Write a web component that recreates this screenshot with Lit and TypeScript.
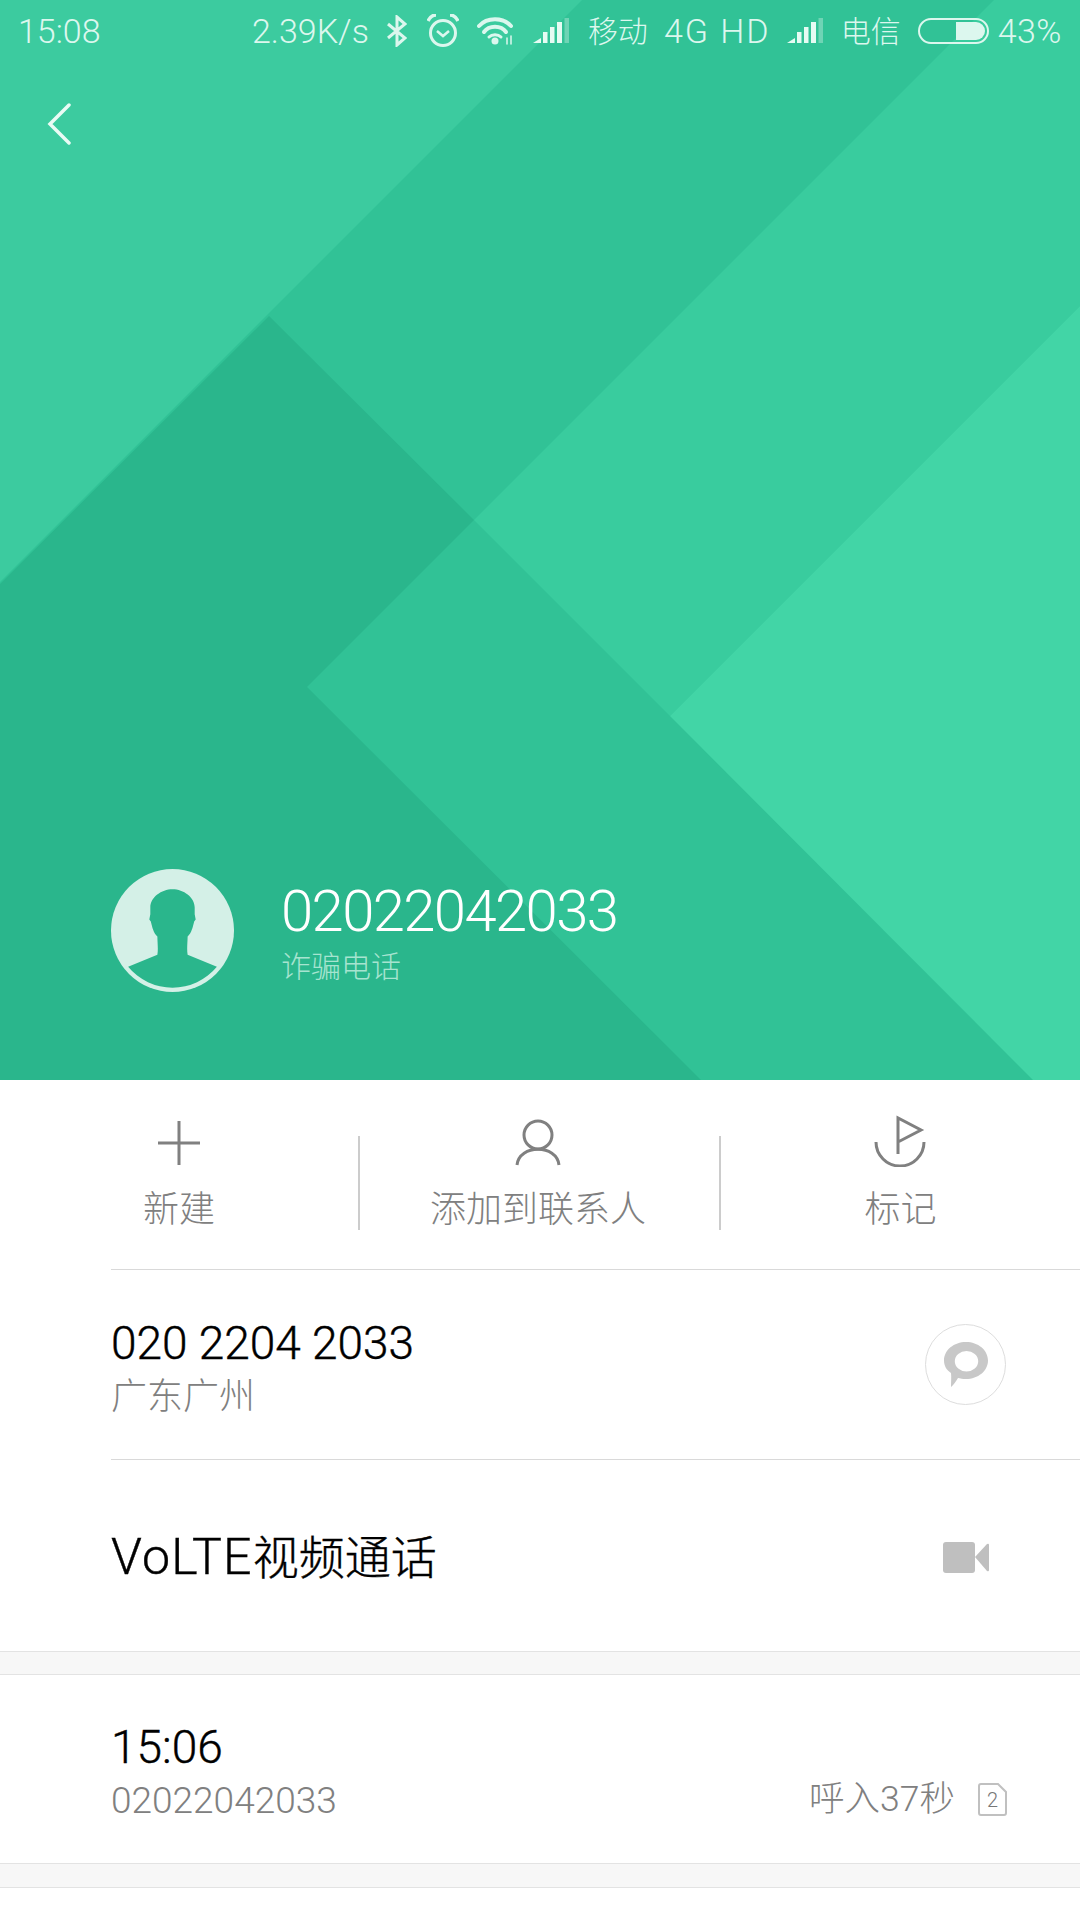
import { LitElement, html, css } from "lit";
import { customElement } from "lit/decorators.js";

const signal = html`<svg class="sig" width="36" height="26" viewBox="0 0 36 26">
  <path d="M0 25 L8 20 V25 Z" fill="#e6fbf3"/>
  <rect x="10" y="14" width="4.5" height="11" fill="#e6fbf3"/>
  <rect x="17" y="9" width="4.5" height="16" fill="#e6fbf3"/>
  <rect x="24" y="4" width="5" height="21" fill="#e6fbf3"/>
  <rect x="31.5" y="0" width="4.5" height="25" fill="#ffffff" opacity="0.3"/>
</svg>`;

@customElement("app-root")
export class AppRoot extends LitElement {
  static styles = css`
    :host {
      display: block;
      width: 1080px;
      height: 1920px;
      background: #fff;
      overflow: hidden;
      font-family: Roboto, "Noto Sans CJK SC", sans-serif;
      font-weight: 300;
    }
    .hero {
      position: relative;
      height: 1080px;
      display: flex;
      flex-direction: column;
      color: #fff;
    }
    .bg {
      position: absolute;
      left: 0;
      top: 0;
    }
    .status {
      position: relative;
      display: flex;
      align-items: center;
      height: 62px;
      padding: 0 18px;
      font-size: 34px;
      color: #dcf7ee;
    }
    .status .right {
      margin-left: auto;
      display: flex;
      align-items: center;
    }
    .right > * {
      flex: none;
    }
    .cn {
      font-size: 30px;
      padding-bottom: 4px;
    }
    .bt {
      margin-left: 18px;
    }
    .alarm {
      margin-left: 20px;
    }
    .wifi {
      margin-left: 18px;
    }
    .sig {
      margin-left: 18px;
    }
    .mobile {
      margin-left: 19px;
    }
    .net {
      margin-left: 16px;
      letter-spacing: 2px;
    }
    .sig2 {
      display: flex;
    }
    .sig2 .sig {
      margin-left: 16px;
    }
    .tele {
      margin-left: 18px;
    }
    .batt {
      margin-left: 17px;
    }
    .pct {
      margin-left: 9px;
      letter-spacing: 0.5px;
    }
    .back {
      position: relative;
      margin: 41px 0 0 46px;
    }
    .who {
      position: relative;
      margin-top: auto;
      display: flex;
      align-items: center;
      padding: 0 0 88px 111px;
    }
    .who .txt {
      margin-left: 47px;
      padding-top: 2px;
    }
    .num {
      font-size: 58px;
      line-height: 68px;
      letter-spacing: -1.6px;
    }
    .tag {
      font-size: 30px;
      line-height: 40px;
      margin-top: 2px;
      color: #a6e4d0;
    }
    .actions {
      display: grid;
      grid-template-columns: 358px 2px 359px 2px 359px;
      height: 189px;
      align-items: start;
    }
    .act {
      display: flex;
      flex-direction: column;
      align-items: center;
      padding-top: 35px;
      color: #808080;
      font-size: 36px;
      line-height: 40px;
    }
    .act span {
      margin-top: 23px;
      white-space: nowrap;
    }
    .act.mid {
      padding-right: 3px;
    }
    .sep {
      height: 94px;
      margin-top: 56px;
      background: #ccc;
    }
    .row {
      margin-left: 111px;
      border-top: 1px solid #d9d9d9;
      height: 189px;
      padding-right: 74px;
      display: flex;
      align-items: center;
      justify-content: space-between;
    }
    .row.tall {
      height: 187px;
      padding-top: 4px;
    }
    .two {
      padding-top: 8px;
    }
    .main {
      font-size: 46px;
      line-height: 56px;
      color: #000;
      -webkit-text-stroke: 0.4px #000;
    }
    .lat {
      font-size: 50px;
      letter-spacing: 1.2px;
    }
    .sub {
      font-size: 36px;
      line-height: 52px;
      color: #808080;
    }
    .sub.dig {
      font-size: 37px;
    }
    .msg {
      width: 81px;
      height: 81px;
      box-sizing: border-box;
      border: 1px solid #ddd;
      border-radius: 50%;
      display: flex;
      align-items: center;
      justify-content: center;
    }
    .video {
      margin-right: 17px;
    }
    .gap {
      height: 22px;
      background: #f7f7f7;
      border-top: 1px solid #e3e3e3;
      border-bottom: 1px solid #e3e3e3;
    }
    .gap.end {
      height: 23px;
    }
    .call {
      height: 188px;
      padding: 0 73px 0 111px;
      display: flex;
      align-items: center;
      justify-content: space-between;
    }
    .info {
      align-self: flex-end;
      margin-bottom: 43px;
      display: flex;
      align-items: center;
      gap: 23px;
      font-size: 35.5px;
      line-height: 42px;
      color: #808080;
    }
  `;

  render() {
    return html`
      <div class="hero">
        <svg class="bg" width="1080" height="1080" viewBox="0 0 1080 1080">
          <rect width="1080" height="1080" fill="#31c296" />
          <polygon points="0,0 582,0 0,582" fill="#3ccb9f" />
          <polygon points="474,520 994,0 1080,0 1080,306 670,716" fill="#39cc9e" />
          <polygon points="670,716 1080,306 1080,1080 1033,1080" fill="#42d5a6" />
          <polygon points="0,584 269,316 474,520 307,687 701,1080 0,1080" fill="#2ab68c" />
        </svg>

        <div class="status">
          <span>15:08</span>
          <div class="right">
            <span>2.39K/s</span>
            <svg class="bt" width="20" height="32" viewBox="0 0 20 32" fill="none" stroke="#dcf7ee" stroke-width="3">
              <path d="M1 9 L18 23 L10 30 V2 L18 9 L1 23" />
            </svg>
            <svg class="alarm" width="32" height="34" viewBox="0 0 32 34" fill="none" stroke="#dcf7ee" stroke-width="3">
              <circle cx="16" cy="19" r="12.5" />
              <path d="M10 17 L16 22 L22 17" stroke-width="2.5" />
              <path d="M1 7 C3 3 6 1 9 1 M31 7 C29 3 26 1 23 1" stroke-width="3.5" />
            </svg>
            <svg class="wifi" width="38" height="28" viewBox="0 0 38 28" fill="none" stroke="#dcf7ee" stroke-linecap="round">
              <path d="M2 9 C10 0 26 0 34 9" stroke-width="4" />
              <path d="M7 15 C12 8 24 8 29 15" stroke-width="4" />
              <path d="M12 20 C15 17 21 17 24 20" stroke-width="3" />
              <circle cx="18" cy="24" r="3.5" fill="#dcf7ee" stroke="none" />
              <path d="M34 19 V27 M30 21 V27" stroke-width="1.5" />
            </svg>
            ${signal}
            <span class="cn mobile">移动</span>
            <span class="net">4G HD</span>
            <span class="sig2">${signal}</span>
            <span class="cn tele">电信</span>
            <svg class="batt" width="71" height="26" viewBox="0 0 71 26">
              <rect x="1" y="1" width="69" height="24" rx="12" fill="none" stroke="#dcf7ee" stroke-width="2" />
              <path d="M38 4 H58 A9 9 0 0 1 58 22 H38 Z" fill="#dcf7ee" />
            </svg>
            <span class="pct">43%</span>
          </div>
        </div>

        <svg class="back" width="26" height="42" viewBox="0 0 26 42" fill="none" stroke="#eafbf5" stroke-width="3.5" stroke-linecap="round">
          <path d="M23 2 L4 21 L23 40" />
        </svg>

        <div class="who">
          <svg width="123" height="123" viewBox="0 0 122 122">
            <circle cx="61" cy="61" r="61" fill="#d4f0e7" />
            <path
              d="M17 97 L46 85 C47 80 46 72 46 67 C42 63 41 58 39.5 52 L38 50 L39 45 L39 38 C39 28 50 20 61 20 C72 20 83 28 83 38 L83 45 L84 50 L82.5 52 C81 58 80 63 76 67 C76 72 75 80 76 85 L105 97 A57 57 0 0 1 17 97 Z"
              fill="#2ab68c"
            />
          </svg>
          <div class="txt">
            <div class="num">02022042033</div>
            <div class="tag">诈骗电话</div>
          </div>
        </div>
      </div>

      <div class="actions">
        <div class="act">
          <svg width="60" height="52" viewBox="0 0 60 52" fill="none" stroke="#808080" stroke-width="3">
            <path d="M30 6 V50 M9 28 H51" />
          </svg>
          <span>新建</span>
        </div>
        <div class="sep"></div>
        <div class="act mid">
          <svg width="60" height="52" viewBox="0 0 60 52" fill="none" stroke="#808080" stroke-width="3">
            <circle cx="30" cy="20" r="14" />
            <path d="M9 50 C11 29 49 29 51 50" />
          </svg>
          <span>添加到联系人</span>
        </div>
        <div class="sep"></div>
        <div class="act">
          <svg width="60" height="52" viewBox="0 0 60 52" fill="none" stroke="#808080" stroke-width="3">
            <path d="M27 39 V3 L50 15 L27 27" />
            <path d="M5 27 A24 24 0 0 0 53 27" />
          </svg>
          <span>标记</span>
        </div>
      </div>

      <div class="row">
        <div class="two">
          <div class="main">020 2204 2033</div>
          <div class="sub">广东广州</div>
        </div>
        <div class="msg">
          <svg width="44" height="46" viewBox="0 0 44 46">
            <path
              fill-rule="evenodd"
              fill="#c8c8c8"
              d="M22 0 C34 0 44 8 44 18.5 C44 29 34 37 22 37 C19 37 16 36.5 14 36 C12 39 9.5 43 7 45 C7 41 7.5 35 7 31 C2.5 28 0 24 0 18.5 C0 8 10 0 22 0 Z M22.5 9 A11.7 10.2 0 1 0 22.5 29.4 A11.7 10.2 0 1 0 22.5 9 Z"
            />
          </svg>
        </div>
      </div>

      <div class="row tall">
        <div class="main"><span class="lat">VoLTE</span>视频通话</div>
        <svg class="video" width="46" height="32" viewBox="0 0 46 32" fill="#bfbfbf">
          <rect width="32" height="31" rx="3" />
          <path d="M32 15 L44 2 Q46 1 46 3 V28 Q46 30 44 29 Z" />
        </svg>
      </div>

      <div class="gap"></div>

      <div class="call">
        <div class="two">
          <div class="main">15:06</div>
          <div class="sub dig">02022042033</div>
        </div>
        <div class="info">
          <span>呼入37秒</span>
          <svg width="29" height="33" viewBox="0 0 29 33" fill="none" stroke="#c0c0c0" stroke-width="2">
            <path d="M1 3 Q1 1 3 1 H20 L28 9 V30 Q28 32 26 32 H3 Q1 32 1 30 Z" />
            <text x="14.5" y="24" font-size="20" fill="#777" stroke="none" text-anchor="middle" font-family="Roboto">2</text>
          </svg>
        </div>
      </div>

      <div class="gap end"></div>
    `;
  }
}
